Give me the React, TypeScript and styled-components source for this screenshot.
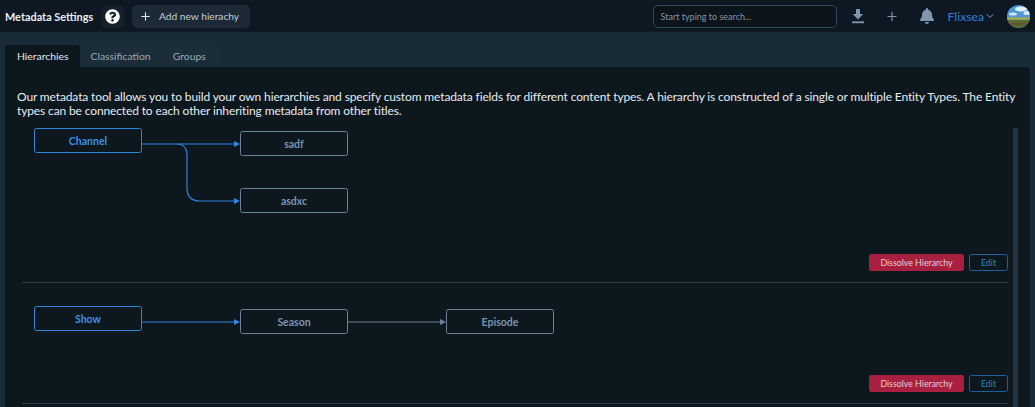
import React from "react";
import styled, { createGlobalStyle } from "styled-components";
import { Plus, ChevronDown } from "lucide-react";
import { FaQuestionCircle, FaBell } from "react-icons/fa";

const Global = createGlobalStyle`
  html, body { margin: 0; padding: 0; background: #1a2b38; }
  body { width: 1035px; height: 407px; overflow: hidden; font-family: Lato, "Open Sans", sans-serif; }
  * { box-sizing: border-box; }
`;

const Page = styled.div`
  width: 1035px;
  height: 407px;
  overflow: hidden;
  display: flex;
  flex-direction: column;
`;
const Header = styled.header`
  height: 32px;
  flex: none;
  background: #0e1822;
  display: flex;
  align-items: center;
  padding: 0 5px 0 5px;
`;
const Title = styled.div`
  font-size: 10.9px;
  font-weight: 700;
  color: #e8edf2;
  width: 96px;
  white-space: nowrap;
`;
const HelpButton = styled.div`
  width: 23px;
  height: 23px;
  border-radius: 5px;
  background: #14212c;
  display: flex;
  align-items: center;
  justify-content: center;
  color: #fff;
  font-size: 15px;
  margin-right: 8px;
`;
const AddButton = styled.div`
  height: 23px;
  width: 118px;
  border-radius: 5px;
  background: #1b2a36;
  color: #c3ced8;
  display: flex;
  align-items: center;
  gap: 7px;
  padding-left: 7px;
  font-size: 10.2px;
  white-space: nowrap;
  svg { color: #e6ebef; }
`;
const Spacer = styled.div`
  flex: 1;
`;
const Search = styled.div`
  width: 184px;
  height: 23px;
  border: 1px solid #34485a;
  border-radius: 5px;
  background: #0b131b;
  color: #8496a6;
  font-size: 9px;
  display: flex;
  align-items: center;
  padding-left: 7px;
  margin-right: 14px;
`;
const IconSlot = styled.div`
  width: 14px;
  display: flex;
  justify-content: center;
  color: #7f97b3;
  margin-right: ${(p: { $gap: number }) => p.$gap}px;
`;
const UserName = styled.div`
  color: #2f80d8;
  font-size: 12.2px;
  display: flex;
  align-items: center;
  margin-right: 11px;
  svg { color: #8a9bb0; }
`;
const Avatar = styled.svg`
  width: 23px;
  height: 23px;
  border-radius: 50%;
  display: block;
`;
const Body = styled.main`
  flex: 1;
  min-height: 0;
  padding: 13px 5px 0;
  display: flex;
  flex-direction: column;
`;
const Tabs = styled.nav`
  display: flex;
  height: 22px;
  flex: none;
`;
const Tab = styled.div<{ $active?: boolean }>`
  height: 22px;
  padding: 0 11px 0 ${(p) => (p.$active ? "12px" : "11px")};
  display: flex;
  align-items: center;
  font-size: 10.4px;
  background: ${(p) => (p.$active ? "#0d171e" : "#1c2d3a")};
  color: ${(p) => (p.$active ? "#e4e9ee" : "#9aa9b6")};
  border-radius: ${(p) => (p.$active ? "3px 3px 0 0" : "0")};
`;
const Panel = styled.section`
  flex: 1;
  min-height: 0;
  background: #0d171e;
  border-radius: 0 3px 0 0;
  padding: 23px 12px 0 12px;
  overflow: hidden;
`;
const Intro = styled.p`
  margin: 0;
  font-size: 12px;
  letter-spacing: -0.13px;
  line-height: 13.5px;
  color: #e6ebef;
`;
const Scroller = styled.div`
  display: flex;
  margin-top: 3px;
  padding-left: 5px;
`;
const Hierarchies = styled.div`
  width: 986px;
  flex: none;
`;
const ScrollTrack = styled.div`
  width: 5px;
  margin: 8px 0 0 5px;
  background: #22323f;
  height: 400px;
  flex: none;
`;
const Section = styled.article`
  border-bottom: 1px solid #2a3a47;
`;
const Canvas = styled.div<{ $height: number }>`
  position: relative;
  height: ${(p) => p.$height}px;
`;
const Links = styled.svg`
  position: absolute;
  left: 0;
  top: 0;
  width: 100%;
  height: 100%;
  overflow: visible;
`;
const Node = styled.div<{ $root?: boolean }>`
  position: absolute;
  width: 108px;
  height: 25px;
  border-radius: 2.5px;
  border: 1.5px solid ${(p) => (p.$root ? "#2e86e0" : "#6f8196")};
  background: #0d171e;
  color: ${(p) => (p.$root ? "#3a91ea" : "#7a93b5")};
  font-size: 10.5px;
  font-weight: 700;
  display: flex;
  align-items: center;
  justify-content: center;
`;
const Actions = styled.div`
  display: flex;
  justify-content: flex-end;
  gap: 5px;
  height: 28px;
`;
const Danger = styled.div`
  width: 95px;
  height: 17px;
  border-radius: 2.5px;
  background: #a8203f;
  color: #e9ccd3;
  font-size: 8.8px;
  display: flex;
  align-items: center;
  justify-content: center;
`;
const EditButton = styled.div`
  width: 39px;
  height: 17px;
  border-radius: 2.5px;
  border: 1px solid #1f5f9e;
  color: #2f80d8;
  font-size: 8.8px;
  display: flex;
  align-items: center;
  justify-content: center;
`;

const Arrow = ({ d, color }: { d: string; color: string }) => (
  <path d={d} fill="none" stroke={color} strokeWidth="1.2" />
);
const Head = ({ x, y, color }: { x: number; y: number; color: string }) => (
  <polygon points={`${x - 6},${y - 3} ${x},${y} ${x - 6},${y + 3}`} fill={color} />
);

const BLUE = "#2e86e0";
const GREY = "#6f8196";

export default function App() {
  return (
    <Page>
      <Global />
      <Header>
        <Title>Metadata Settings</Title>
        <HelpButton>
          <FaQuestionCircle />
        </HelpButton>
        <AddButton>
          <Plus size={13} />
          Add new hierachy
        </AddButton>
        <Spacer />
        <Search>Start typing to search...</Search>
        <IconSlot $gap={20}>
          <svg width="14" height="15" viewBox="0 0 14 15" fill="currentColor">
            <path d="M5 0h4v5h3.2L7 10.4 1.8 5H5z" />
            <rect x="1" y="12.4" width="12" height="1.8" />
          </svg>
        </IconSlot>
        <IconSlot $gap={21}>
          <Plus size={17} />
        </IconSlot>
        <IconSlot $gap={14}>
          <FaBell size={16} />
        </IconSlot>
        <UserName>
          Flixsea
          <ChevronDown size={12} />
        </UserName>
        <Avatar viewBox="0 0 23 23">
          <rect width="23" height="23" fill="#4f97d8" />
          <ellipse cx="14" cy="4" rx="6" ry="2.5" fill="#e4eef6" />
          <ellipse cx="20" cy="8" rx="3.5" ry="2" fill="#dbe8f2" />
          <ellipse cx="6" cy="9" rx="4" ry="1.5" fill="#d3e3f0" />
          <rect y="12" width="23" height="3" fill="#8fa868" />
          <rect y="15" width="23" height="8" fill="#5a6b32" />
          <rect x="4" y="18" width="15" height="2" fill="#6b4f2c" />
        </Avatar>
      </Header>
      <Body>
        <Tabs>
          <Tab $active>Hierarchies</Tab>
          <Tab>Classification</Tab>
          <Tab>Groups</Tab>
        </Tabs>
        <Panel>
          <Intro>
            Our metadata tool allows you to build your own hierarchies and specify custom metadata fields for different
            content types. A hierarchy is constructed of a single or multiple Entity Types. The Entity types can be
            connected to each other inheriting metadata from other titles.
          </Intro>
          <Scroller>
            <Hierarchies>
              <Section>
                <Canvas $height={134}>
                  <Links>
                    <Arrow d="M120 24H212" color={BLUE} />
                    <Head x={218} y={24} color={BLUE} />
                    <Arrow d="M155 24Q165 24 165 36V68Q165 81 178 81H212" color={BLUE} />
                    <Head x={218} y={81} color={BLUE} />
                  </Links>
                  <Node $root style={{ left: 12, top: 8 }}>Channel</Node>
                  <Node style={{ left: 218, top: 11 }}>sadf</Node>
                  <Node style={{ left: 218, top: 68 }}>asdxc</Node>
                </Canvas>
                <Actions>
                  <Danger>Dissolve Hierarchy</Danger>
                  <EditButton>Edit</EditButton>
                </Actions>
              </Section>
              <Section>
                <Canvas $height={92}>
                  <Links>
                    <Arrow d="M120 39H212" color={BLUE} />
                    <Head x={218} y={39} color={BLUE} />
                    <Arrow d="M326 39H418" color={GREY} />
                    <Head x={424} y={39} color={GREY} />
                  </Links>
                  <Node $root style={{ left: 12, top: 23 }}>Show</Node>
                  <Node style={{ left: 218, top: 26 }}>Season</Node>
                  <Node style={{ left: 424, top: 26 }}>Episode</Node>
                </Canvas>
                <Actions>
                  <Danger>Dissolve Hierarchy</Danger>
                  <EditButton>Edit</EditButton>
                </Actions>
              </Section>
            </Hierarchies>
            <ScrollTrack />
          </Scroller>
        </Panel>
      </Body>
    </Page>
  );
}
